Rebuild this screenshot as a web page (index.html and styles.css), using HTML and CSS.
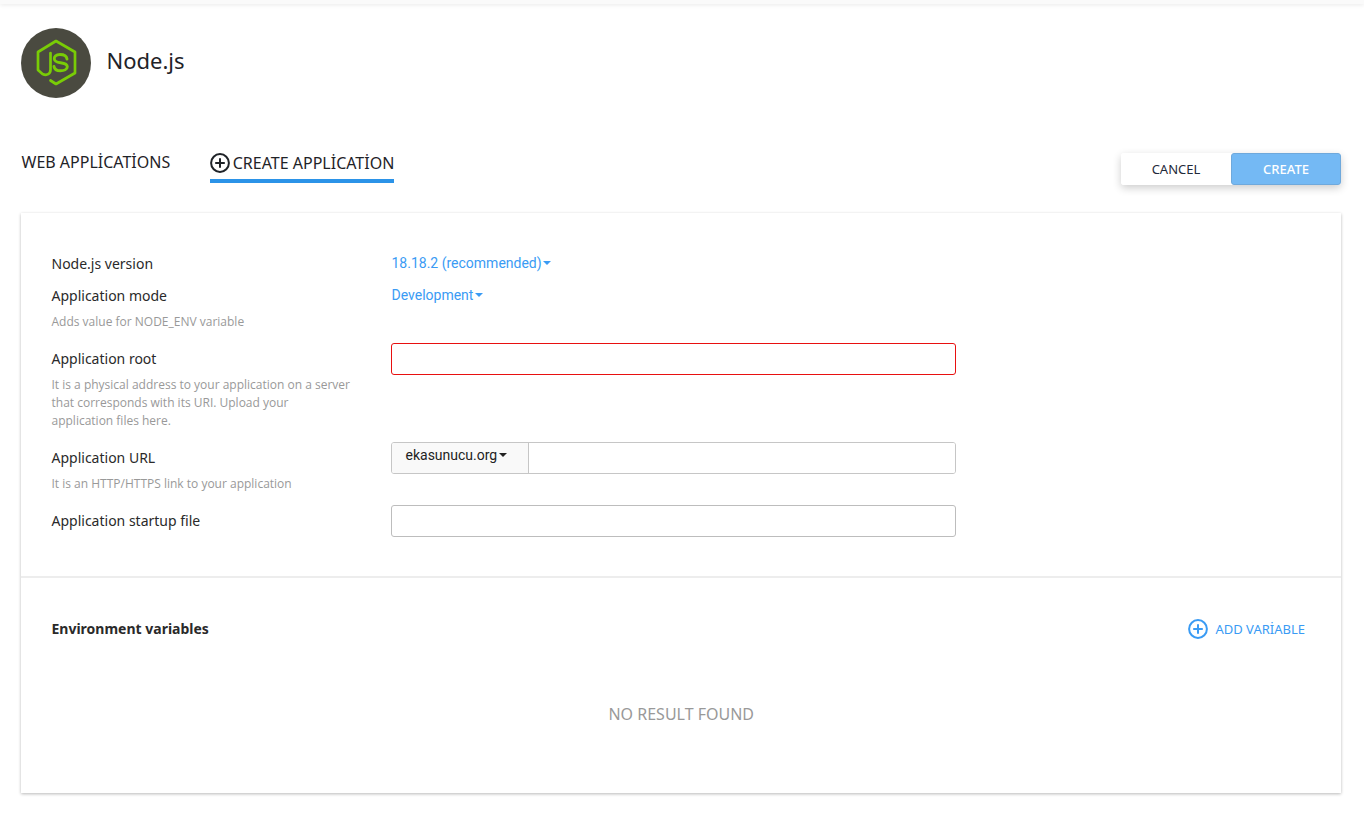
FILE: index.html
```html
<!DOCTYPE html>
<html lang="tr">
<head>
<meta charset="utf-8">
<title>Node.js</title>
<link rel="stylesheet" href="styles.css">
</head>
<body>
<div class="topbar"></div>
<main class="page">
  <header class="app-header">
    <svg class="logo" width="70" height="70" viewBox="0 0 70 70" aria-hidden="true">
      <circle cx="35" cy="35" r="35" fill="#4a4a40"/>
      <g fill="none" stroke="#79cc06" stroke-linejoin="round" stroke-linecap="round">
        <path stroke-width="2.7" d="M29.5 52.5 L35 56 L54 45 V24 L35 13 L17 24 V42 L21.5 46 C26 48 29.5 46 29.5 41.5 V25"/>
        <path stroke-width="2.9" d="M46 31 C45.5 27.5 42 26.5 39 26.5 C35 26.5 33 28.5 33.3 31 C33.5 33.5 36 34.3 39.5 34.8 C43.5 35.3 46.3 36 46.3 38.8 C46.3 41.5 43 42.8 39.5 42.8 C36 42.8 33.5 41.5 33 38.5"/>
      </g>
    </svg>
    <h1 class="app-title">Node.js</h1>
  </header>

  <nav class="toolbar">
    <a class="tab">WEB APPLİCATİONS</a>
    <a class="tab tab-active">
      <svg class="tab-icon" width="20" height="20" viewBox="0 0 20 20" aria-hidden="true">
        <circle cx="10" cy="10" r="8.9" fill="none" stroke="#1f2328" stroke-width="2"/>
        <path d="M10 5.2V14.8M5.2 10H14.8" fill="none" stroke="#1f2328" stroke-width="2"/>
      </svg>
      CREATE APPLİCATİON
    </a>
    <div class="actions">
      <button class="btn btn-cancel">CANCEL</button>
      <button class="btn btn-create">CREATE</button>
    </div>
  </nav>

  <section class="panel">
    <div class="form">
      <div class="row row-tight">
        <div class="label-col"><div class="label">Node.js version</div></div>
        <a class="dropdown">18.18.2 (recommended)<span class="caret"></span></a>
      </div>
      <div class="row">
        <div class="label-col">
          <div class="label">Application mode</div>
          <div class="hint">Adds value for NODE_ENV variable</div>
        </div>
        <a class="dropdown">Development<span class="caret"></span></a>
      </div>
      <div class="row">
        <div class="label-col">
          <div class="label">Application root</div>
          <div class="hint">It is a physical address to your application on a server that corresponds with its URI. Upload your application files here.</div>
        </div>
        <input class="input input-error" type="text">
      </div>
      <div class="row">
        <div class="label-col">
          <div class="label">Application URL</div>
          <div class="hint">It is an HTTP/HTTPS link to your application</div>
        </div>
        <div class="input-group">
          <div class="addon">ekasunucu.org<span class="caret caret-dark"></span></div>
          <input class="group-input" type="text">
        </div>
      </div>
      <div class="row row-last">
        <div class="label-col"><div class="label">Application startup file</div></div>
        <input class="input" type="text">
      </div>
    </div>

    <div class="env">
      <div class="env-head">
        <h2 class="env-title">Environment variables</h2>
        <a class="add-var">
          <svg width="20" height="20" viewBox="0 0 20 20" aria-hidden="true">
            <circle cx="10" cy="10" r="8.9" fill="none" stroke="#3a9bf4" stroke-width="2"/>
            <path d="M10 5.2V14.8M5.2 10H14.8" fill="none" stroke="#3a9bf4" stroke-width="2"/>
          </svg>
          ADD VARİABLE
        </a>
      </div>
      <div class="empty">NO RESULT FOUND</div>
    </div>
  </section>
</main>
</body>
</html>
```
FILE: styles.css
```css
* { box-sizing: border-box; }
html, body { margin: 0; padding: 0; }
body {
  background: #fff;
  color: #1f2328;
  font-family: "Noto Sans", "Open Sans", sans-serif;
  font-size: 14px;
  height: 828px;
  overflow: hidden;
}
.topbar {
  height: 4px;
  background: #fafafa;
  box-shadow: 0 1px 4px rgba(0,0,0,.09);
}
.page { padding: 24px 23px 0 21px; }
.app-header { display: flex; align-items: flex-start; height: 70px; }
.logo { flex: none; }
.app-title {
  margin: 15px 0 0 15.5px;
  font-size: 22px;
  line-height: 34px;
  font-weight: 400;
}
.toolbar {
  display: flex;
  align-items: flex-start;
  margin-top: 53px;
  height: 62px;
}
.tab {
  display: block;
  font-size: 16px;
  line-height: 22px;
  padding-left: 0.5px;
}
.tab-active {
  display: flex;
  align-items: center;
  gap: 3px;
  margin-left: 39.5px;
  padding: 1px 0 5px;
  height: 32px;
  border-bottom: 4px solid #2b93e8;
}
.actions {
  display: flex;
  margin-left: auto;
  margin-top: 2px;
  border-radius: 3px;
  box-shadow: 0 3px 8px rgba(0,0,0,.2);
}
.btn {
  width: 110px;
  height: 32px;
  border: 0;
  font: 400 13px/20px "Noto Sans", sans-serif;
  padding: 0;
}
.btn-cancel {
  background: #fff;
  color: #1f2a3a;
  border-radius: 3px 0 0 3px;
}
.btn-create {
  background: #74b9f4;
  color: #fff;
  font-weight: 500;
  border: 1px solid #6fa9dc;
  border-radius: 3px;
}
.panel {
  background: #fff;
  box-shadow: 0 1px 3px rgba(0,0,0,.28);
  height: 580px;
}
.form {
  padding: 35px 30px 39px 30.5px;
  border-bottom: 2px solid #ededed;
}
.row {
  display: flex;
  align-items: flex-start;
  margin-bottom: 13px;
}
.row-tight { margin-bottom: 6px; }
.row-last { margin-bottom: 0; }
.label-col { width: 339.5px; flex: none; padding-top: 6px; }
.label { font-size: 14px; line-height: 20px; color: #2a2a2a; }
.hint {
  margin: 7px 0 -1px;
  width: 300px;
  font-family: "Open Sans", "Noto Sans", sans-serif;
  font-size: 12px;
  line-height: 18px;
  color: #999;
}
.dropdown {
  display: inline-flex;
  align-items: center;
  margin-top: 5px;
  padding-left: 0.5px;
  font-family: Roboto, sans-serif;
  font-size: 14px;
  line-height: 20px;
  color: #3a9bf4;
}
.caret {
  width: 0;
  height: 0;
  margin-left: 1.5px;
  border-left: 4px solid transparent;
  border-right: 4px solid transparent;
  border-top: 4px solid #3a9bf4;
}
.caret-dark { border-top-color: #222; }
.input {
  display: block;
  width: 565px;
  height: 32px;
  padding: 0 10px;
  background: #fff;
  border: 1px solid #bdbdbd;
  border-radius: 3px;
  outline: 0;
}
.input-error { border-color: #e81010; }
.input-group {
  display: flex;
  width: 565px;
  height: 32px;
  border: 1px solid #c6c6c6;
  border-radius: 3px;
  overflow: hidden;
}
.addon {
  display: flex;
  align-items: center;
  width: 137px;
  flex: none;
  padding: 0 0 7px 13.5px;
  background: #f9f9f9;
  border-right: 1px solid #c6c6c6;
  font-family: Roboto, sans-serif;
  font-size: 14px;
  color: #222;
}
.group-input { flex: 1; border: 0; outline: 0; padding: 0 10px; min-width: 0; }
.env { padding: 41px 36px 0 30.5px; }
.env-head {
  display: flex;
  align-items: center;
  justify-content: space-between;
  height: 20px;
}
.env-title { margin: 0; font-size: 14px; line-height: 20px; font-weight: 700; color: #2a2a2a; }
.add-var {
  display: flex;
  align-items: center;
  gap: 7px;
  font-size: 13px;
  color: #3a9bf4;
}
.empty {
  margin-top: 64px;
  padding-left: 6px;
  text-align: center;
  font-size: 16px;
  line-height: 22px;
  color: #999;
}
```
